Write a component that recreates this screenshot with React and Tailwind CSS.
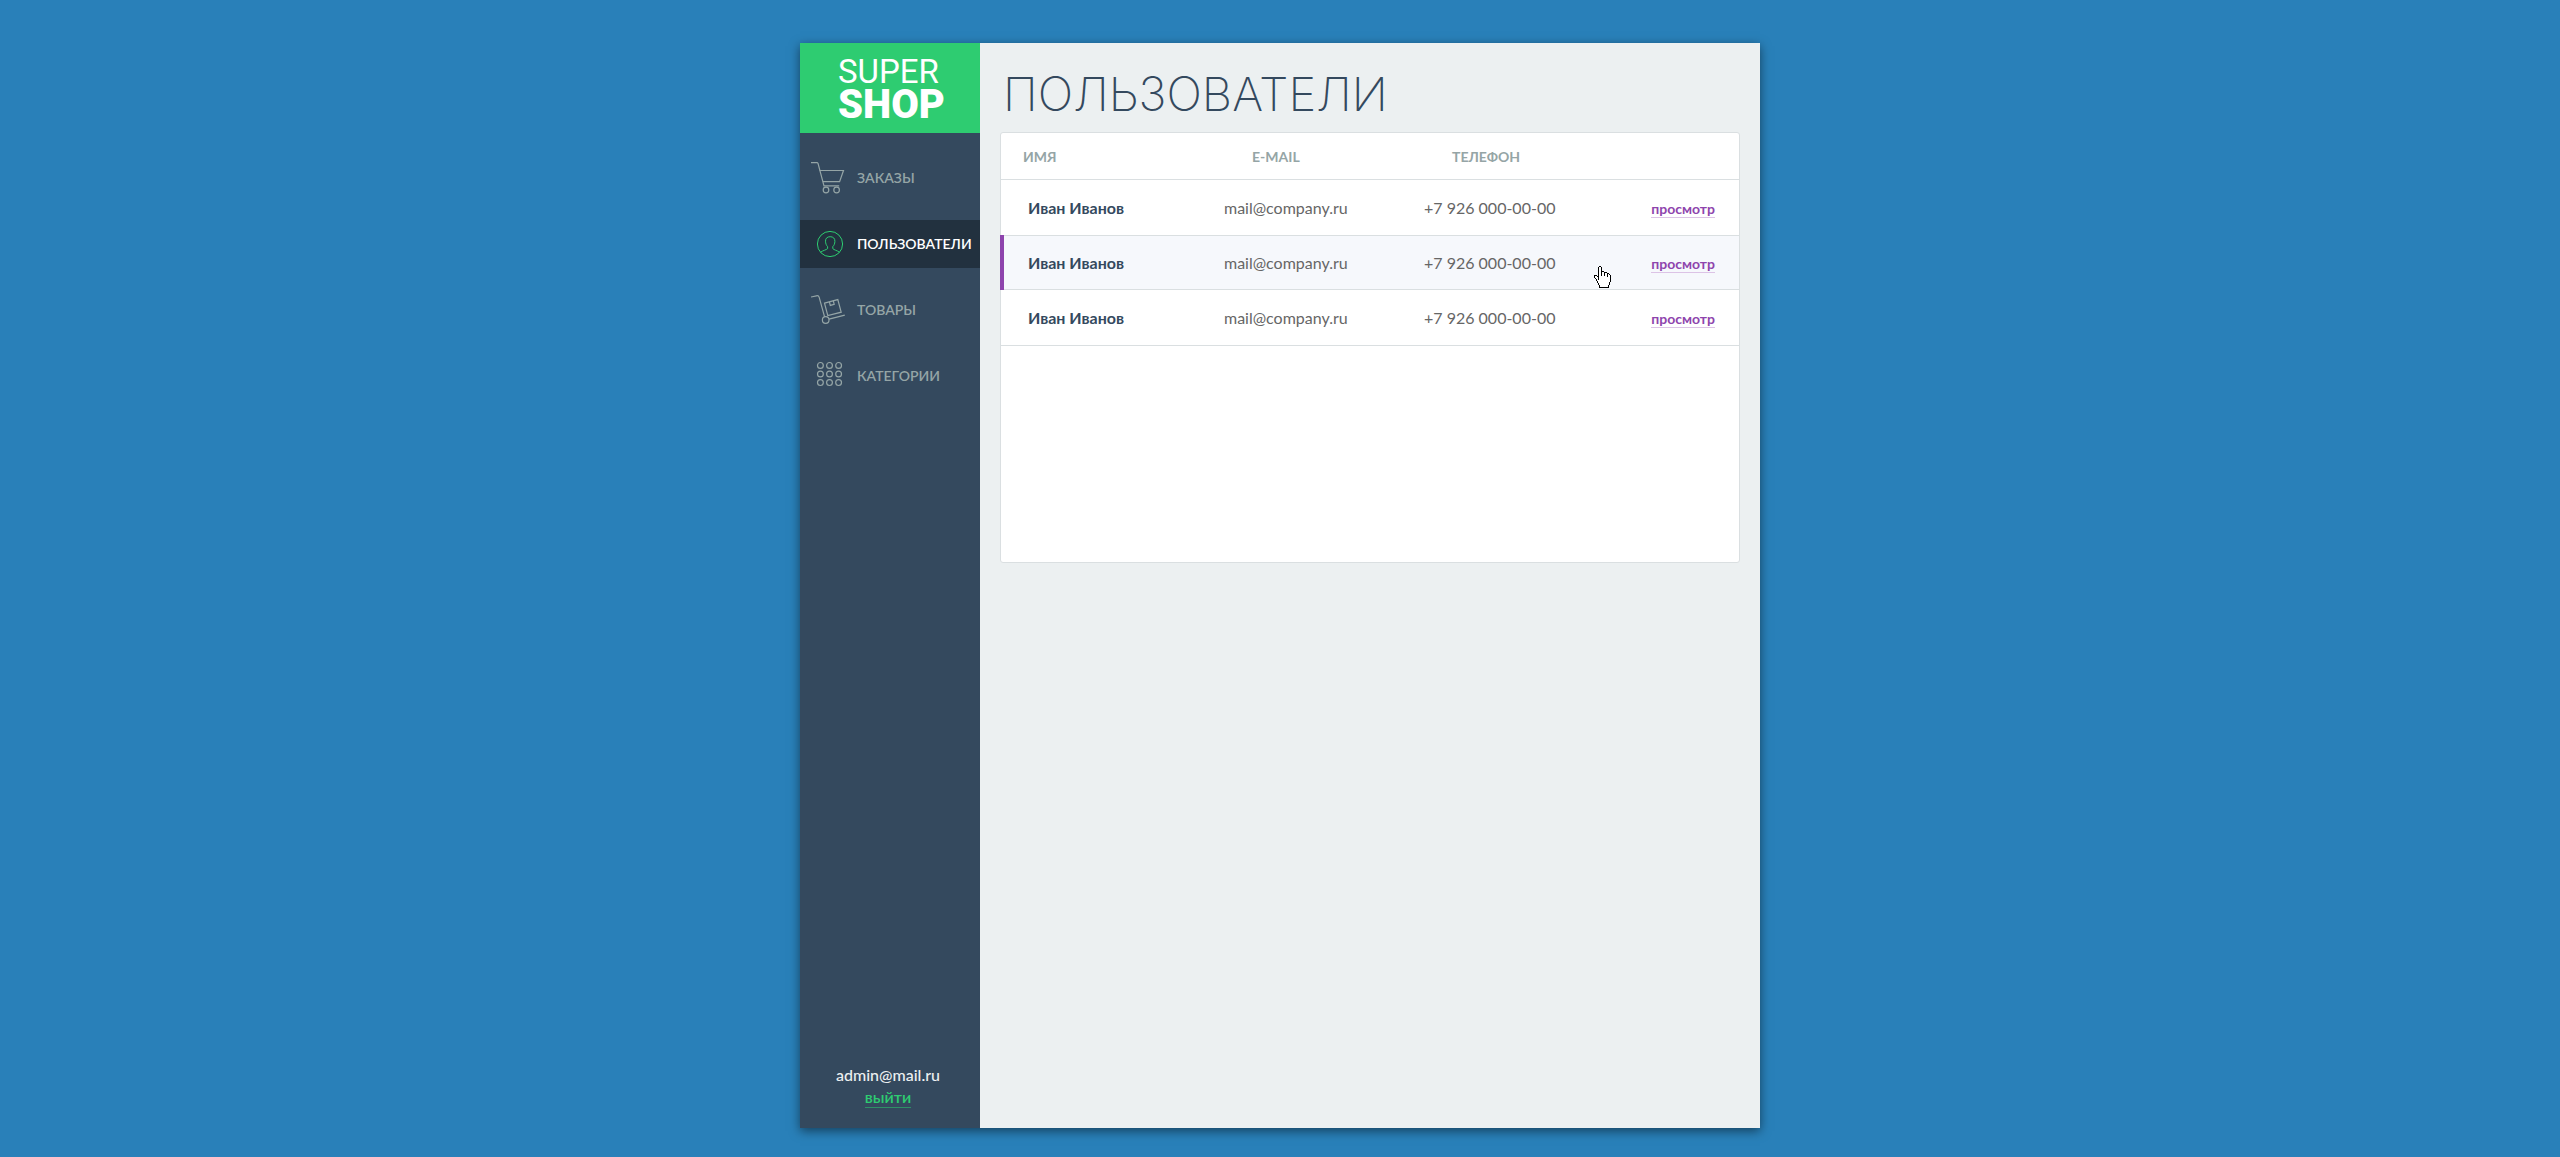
const stroke = { fill: "none", stroke: "currentColor", strokeWidth: 1.2 };

function CartIcon() {
  return (
    <svg viewBox="5 5 36 36" className="size-9 shrink-0" aria-hidden="true" {...stroke}>
      <path d="M5 7.6H11.2L12 8.4L18 30.8H33.2" />
      <path d="M13.6 15.5H37.5L33.6 26.6H16.9" />
      <circle cx="20" cy="35" r="2.8" />
      <circle cx="30.6" cy="35" r="2.8" />
    </svg>
  );
}

function UserIcon() {
  return (
    <svg viewBox="0 0 36 36" className="size-9 shrink-0 text-[#2ecc71]" aria-hidden="true" {...stroke} strokeWidth="1">
      <circle cx="19" cy="18" r="12.6" />
      <path d="M9.6 26.2C12 24.4 15.2 24 16.6 22.6V20.6C15.4 19.4 14.6 17.6 14.5 15.2C14.4 12.2 16.4 10.7 19.2 10.7C22.2 10.7 24 12.4 23.9 15.4C23.8 17.8 23 19.5 21.8 20.6V22.6C23 24 26 24.4 28.4 26.2" />
    </svg>
  );
}

function TrolleyIcon() {
  return (
    <svg viewBox="5 7 36 36" className="size-9 shrink-0" aria-hidden="true" {...stroke}>
      <path d="M5 12L10.4 10.8C11.8 10.5 12.8 11 13.2 12.4L18.6 31.8" />
      <circle cx="19.7" cy="35" r="3.3" />
      <path d="M23 34.2L38.8 30.2" />
      <path d="M18.5 18.2L31.8 14.6L35.2 27.2L21.8 30.6Z" />
      <path d="M23.4 17L24.3 20.4L28.2 19.4L27.3 15.9" />
    </svg>
  );
}

function GridIcon() {
  return (
    <svg viewBox="0 0 36 36" className="size-9 shrink-0" aria-hidden="true" {...stroke}>
      {[7.4, 16, 24.6].map((y) =>
        [9.4, 18.5, 27.6].map((x) => <circle key={`${x}-${y}`} cx={x} cy={y} r="2.9" />)
      )}
    </svg>
  );
}

const HAND = [
  ".....##..........",
  "....#..#.........",
  "....#..#.........",
  "....#..#.........",
  "....#..#.........",
  "....#..###.......",
  "....#..#..###....",
  "....#..#..#..##..",
  "....#..#..#..#.#.",
  "###.#..#..#..#..#",
  "#..##........#..#",
  "#...#...........#",
  ".#..#...........#",
  "..#.#...........#",
  "..#.............#",
  "...#............#",
  "...#...........#.",
  "....#..........#.",
  "....#..........#.",
  ".....#........#..",
  ".....#........#..",
  ".....##########..",
];

function HandCursor() {
  return (
    <svg
      viewBox="0 0 17 22"
      shapeRendering="crispEdges"
      className="pointer-events-none absolute top-[30px] left-[170px] h-[22px] w-[17px]"
      aria-hidden="true"
    >
      {HAND.map((row, y) => (
        <g key={y}>
          <rect x={row.indexOf("#")} y={y} width={row.lastIndexOf("#") - row.indexOf("#") + 1} height="1" fill="#fff" />
          {[...row].map((c, x) => c === "#" && <rect key={x} x={x} y={y} width="1" height="1" fill="#000" />)}
        </g>
      ))}
    </svg>
  );
}

const NAV = [
  { label: "ЗАКАЗЫ", Icon: CartIcon },
  { label: "ПОЛЬЗОВАТЕЛИ", Icon: UserIcon, active: true },
  { label: "ТОВАРЫ", Icon: TrolleyIcon },
  { label: "КАТЕГОРИИ", Icon: GridIcon },
];

const USERS = [
  { id: 1, name: "Иван Иванов", mail: "mail@company.ru", phone: "+7 926 000-00-00" },
  { id: 2, name: "Иван Иванов", mail: "mail@company.ru", phone: "+7 926 000-00-00", hovered: true },
  { id: 3, name: "Иван Иванов", mail: "mail@company.ru", phone: "+7 926 000-00-00" },
];

function Sidebar() {
  return (
    <aside className="flex w-[180px] shrink-0 flex-col bg-[#34495e]">
      <a href="#home" className="flex h-[90px] flex-col bg-[#2ecc71] pt-3 pl-[38px] font-[Roboto,sans-serif] text-white">
        <span className="text-[33px] leading-[34px] font-normal">SUPER</span>
        <span className="text-[40px] leading-8 font-black">SHOP</span>
      </a>
      <nav className="flex flex-col gap-[18px] pt-[21px]">
        {NAV.map(({ label, Icon, active }) => (
          <a
            key={label}
            href="#section"
            aria-current={active ? "page" : undefined}
            className={
              active
                ? "flex h-12 items-center gap-2.5 bg-[#22313f] pl-[11px] text-sm font-semibold text-white"
                : "flex h-12 items-center gap-2.5 pl-[11px] text-sm font-semibold text-[#95a5a6]"
            }
          >
            <Icon />
            {label}
          </a>
        ))}
      </nav>
      <div className="mt-auto flex flex-col items-center pr-1 pb-5 text-base text-[#ecf0f1]">
        <span className="leading-6 font-medium">admin@mail.ru</span>
        <a href="#logout" className="border-b border-[#2f9066] leading-5 font-semibold text-[#2ecc71]">
          выйти
        </a>
      </div>
    </aside>
  );
}

function UsersTable() {
  return (
    <div className="min-h-[431px] rounded-[3px] border border-[#dadfe1] bg-white">
      <table className="w-full table-fixed border-separate border-spacing-0 text-left">
        <thead>
          <tr className="h-[47px] text-sm text-[#95a5a6] [&>th]:border-b [&>th]:border-[#dadfe1] [&>th]:pt-0.5 [&>th]:font-bold">
            <th className="w-[223px] pl-[22px]">ИМЯ</th>
            <th className="w-[200px] pl-7">E-MAIL</th>
            <th className="pl-7">ТЕЛЕФОН</th>
            <th className="w-[130px]" aria-label="Действия" />
          </tr>
        </thead>
        <tbody>
          {USERS.map((u) => (
            <tr
              key={u.id}
              className={
                u.hovered
                  ? "h-[54px] bg-[#f6f8fc] [&>td]:border-b [&>td]:border-[#dadfe1]"
                  : "h-14 [&>td]:border-b [&>td]:border-[#dadfe1]"
              }
            >
              <td className="relative pl-[27px] font-bold text-[#34495e]">
                {u.hovered && <span className="absolute -top-px -bottom-px -left-px w-1 bg-[#8e44ad]" />}
                {u.name}
              </td>
              <td className="text-[#666]">{u.mail}</td>
              <td className="relative text-[#666]">
                {u.phone}
                {u.hovered && <HandCursor />}
              </td>
              <td className="pr-6 text-right">
                <a href="#view" className="inline-block border-b border-[#dcc3e6] text-sm leading-4 font-bold text-[#8e44ad]">
                  просмотр
                </a>
              </td>
            </tr>
          ))}
        </tbody>
      </table>
    </div>
  );
}

export default function App() {
  return (
    <div className="flex min-h-screen justify-center bg-[#2980b9] pt-[43px] pb-[29px] font-[Lato,sans-serif]">
      <div className="flex w-full max-w-[960px] shadow-[0_3px_10px_rgba(0,0,0,0.5)]">
        <Sidebar />
        <main className="min-w-0 flex-1 bg-[#ecf0f1] px-5">
          <h1 className="flex h-[89px] items-center pt-3.5 pl-[3px] font-[Inter,sans-serif] text-[47px] font-extralight text-[#34495e]">
            ПОЛЬЗОВАТЕЛИ
          </h1>
          <UsersTable />
        </main>
      </div>
    </div>
  );
}
